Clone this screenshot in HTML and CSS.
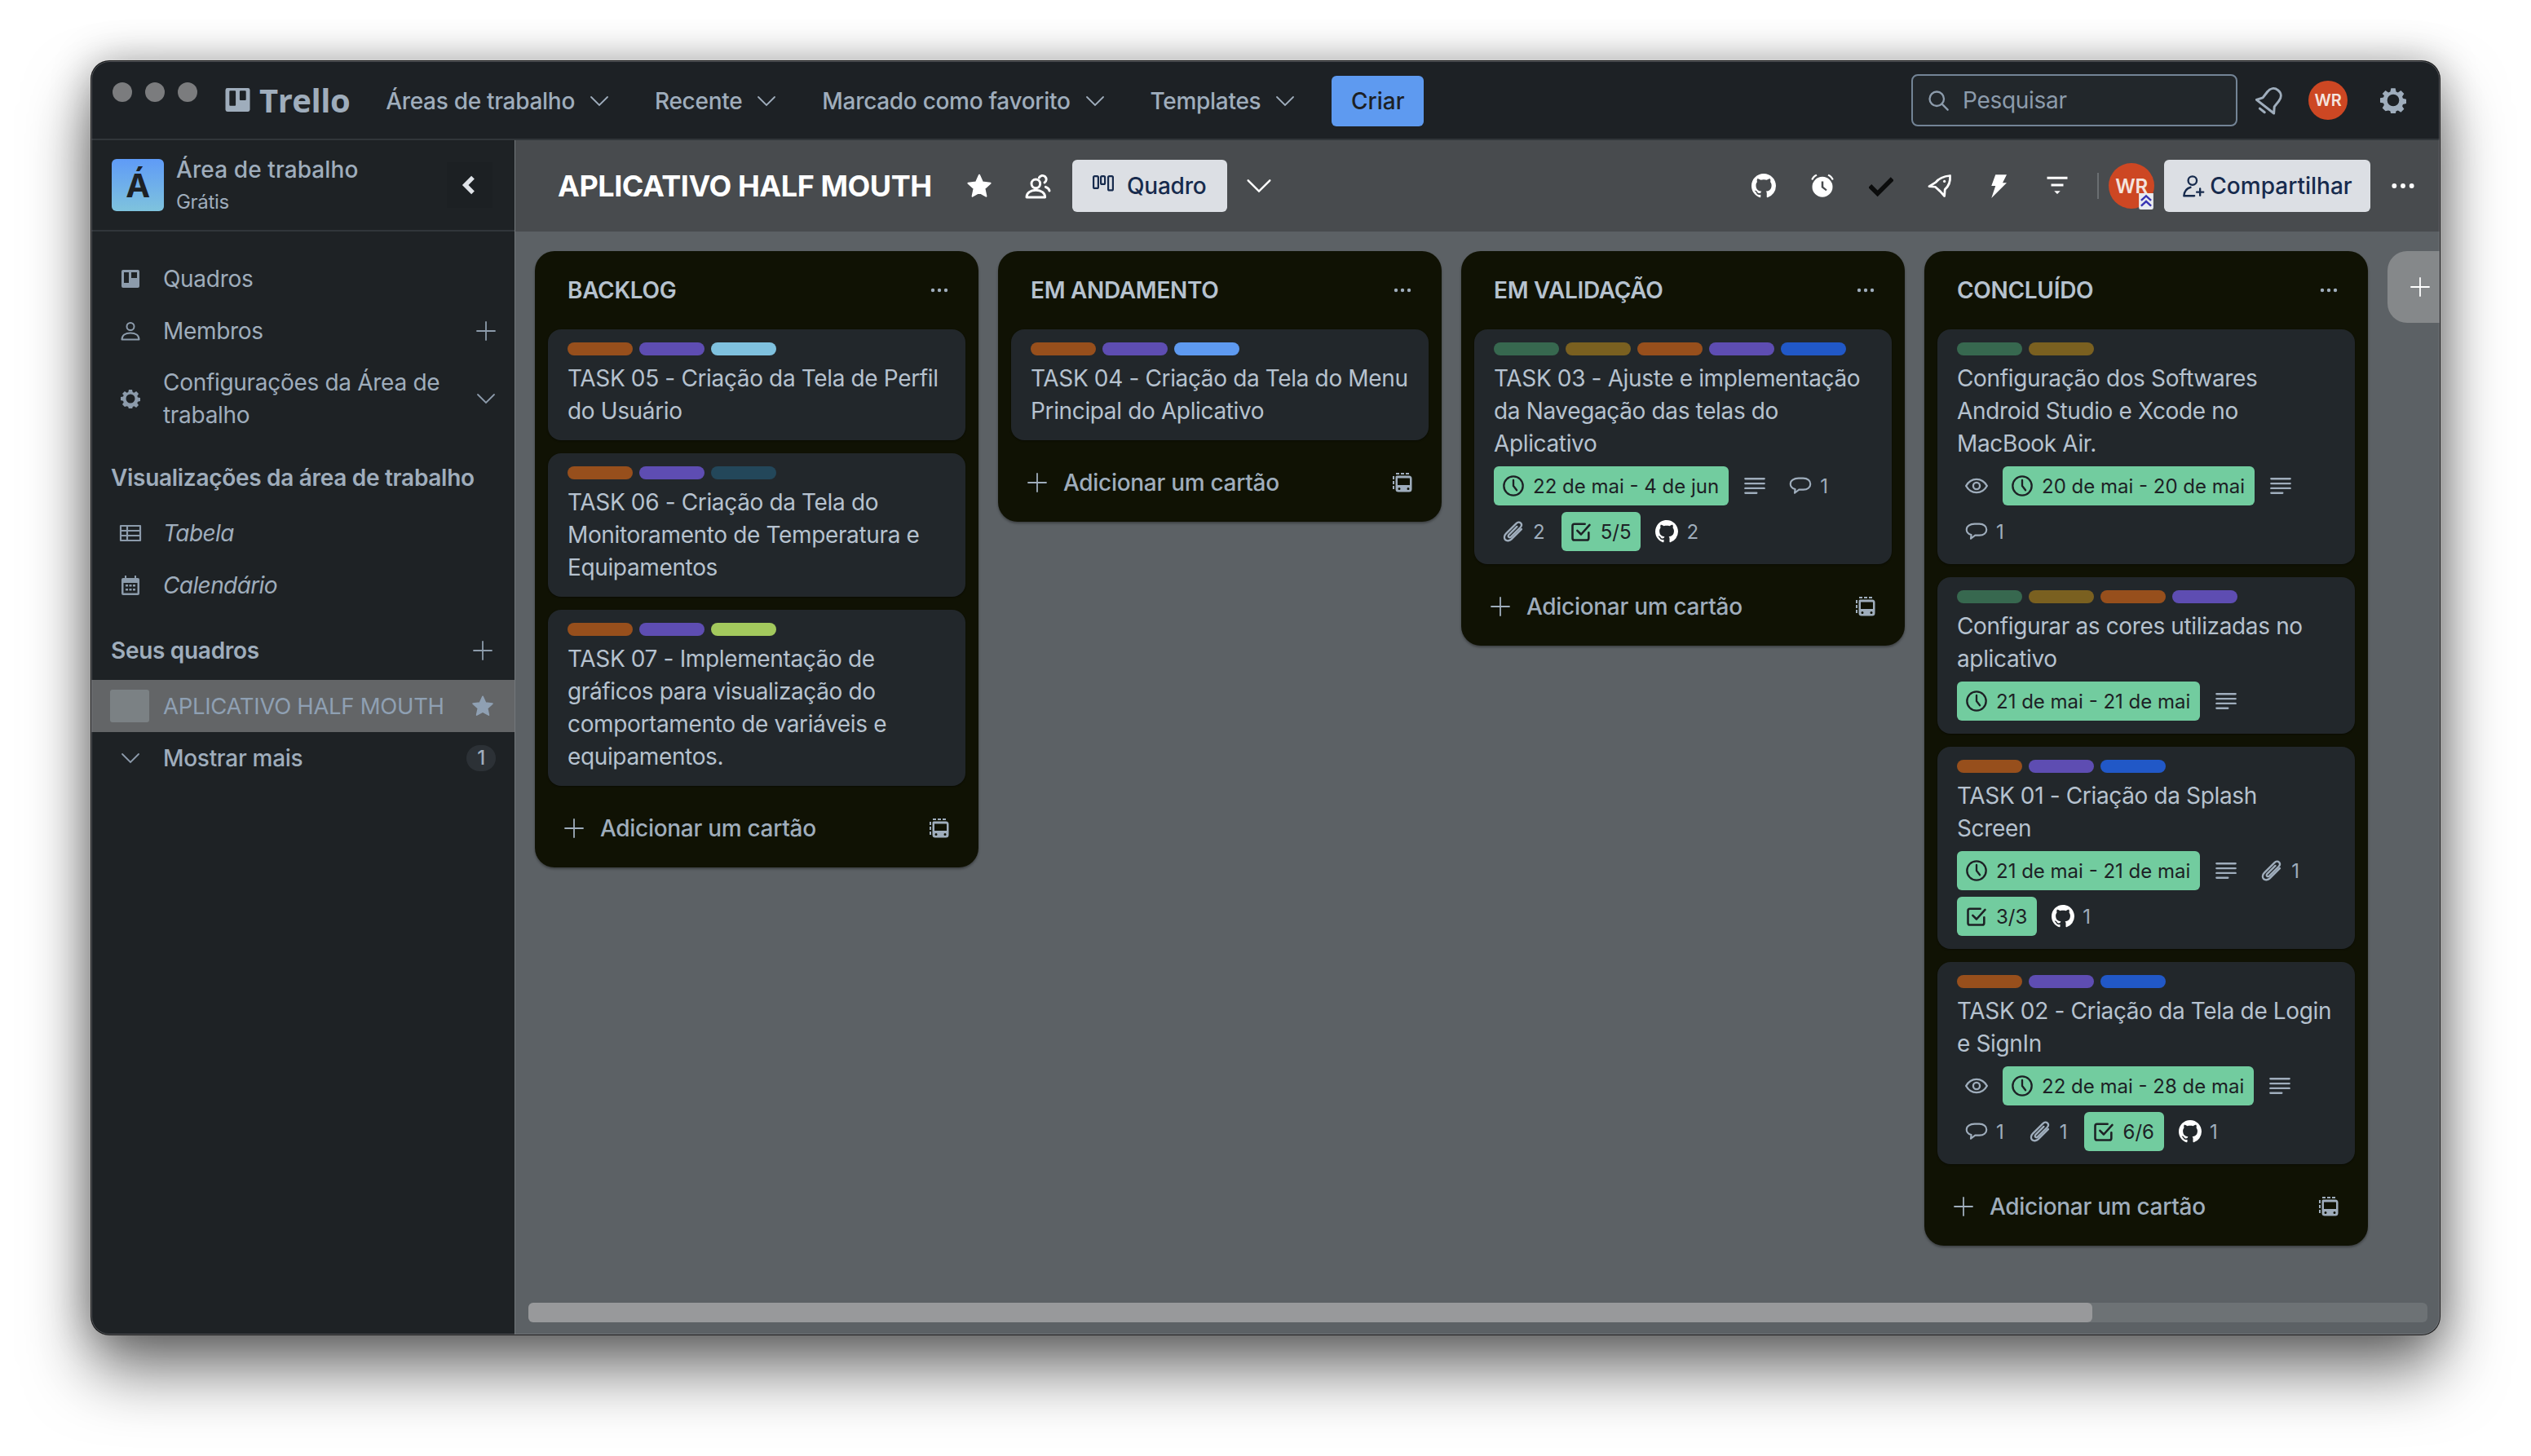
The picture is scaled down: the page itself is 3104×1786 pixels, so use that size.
FILE: index.html
```html
<!DOCTYPE html>
<html lang="pt-BR">
<head>
    <meta charset="UTF-8">
    <title>APLICATIVO HALF MOUTH | Trello</title>
    <link rel="stylesheet" href="styles.css">
</head>
<body>

<svg class="sprite" xmlns="http://www.w3.org/2000/svg">
    <symbol id="i-logo" viewBox="0 0 32 32"><path fill="currentColor" fill-rule="evenodd" d="M3 1h26a2.5 2.5 0 0 1 2.5 2.5v25A2.5 2.5 0 0 1 29 31H3a2.5 2.5 0 0 1-2.5-2.500v-25A2.5 2.5 0 0 1 3 1zm2.5 4.500v17a1 1 0 0 0 1 1h6a1 1 0 0 0 1-1v-17a1 1 0 0 0-1-1h-6a1 1 0 0 0-1 1zm13 0v10a1 1 0 0 0 1 1h6a1 1 0 0 0 1-1v-10a1 1 0 0 0-1-1h-6a1 1 0 0 0-1 1z"/></symbol>
    <symbol id="i-chev" viewBox="0 0 24 24"><path fill="none" stroke="currentColor" stroke-width="1.8" stroke-linecap="round" d="M2 7l10 10L22 7"/></symbol>
    <symbol id="i-plus" viewBox="0 0 24 24"><path fill="none" stroke="currentColor" stroke-width="1.8" stroke-linecap="round" d="M12 1v22M1 12h22"/></symbol>
    <symbol id="i-dots" viewBox="0 0 24 24"><circle cx="4" cy="12" r="2.2" fill="currentColor"/><circle cx="12" cy="12" r="2.2" fill="currentColor"/><circle cx="20" cy="12" r="2.2" fill="currentColor"/></symbol>
    <symbol id="i-search" viewBox="0 0 24 24"><circle cx="10.5" cy="10.5" r="7.500" fill="none" stroke="currentColor" stroke-width="2"/><path stroke="currentColor" stroke-width="2" stroke-linecap="round" d="M16 16l6 6"/></symbol>
    <symbol id="i-bell" viewBox="0 0 24 24"><g fill="none" stroke="currentColor" stroke-width="2" stroke-linejoin="round" stroke-linecap="round" transform="rotate(38 12 12)"><path d="M12 1.500c-3.700 0-6 2.700-6 6.500v6l-3 4.500h18L18 14V8c0-3.800-2.300-6.500-6-6.500z"/><path d="M9.500 22.500h5"/></g></symbol>
    <symbol id="i-gear" viewBox="0 0 24 24"><path fill="currentColor" fill-rule="evenodd" d="M10 1h4l.7 3.100 1.700.7L19.100 3l2.900 3-1.700 2.700.7 1.700 3 .6v4l-3 .7-.7 1.700 1.700 2.700-2.900 2.900-2.700-1.700-1.700.7-.7 3.100h-4l-.7-3.100-1.700-.7L4.900 22 2 19.100l1.700-2.700-.7-1.700-3-.7v-4l3-.6.7-1.700L2 6l2.900-3 2.700 1.800 1.700-.7zm2 5.500a5.500 5.500 0 1 0 0 11 5.500 5.500 0 0 0 0-11z"/></symbol>
    <symbol id="i-board" viewBox="0 0 24 24"><path fill="currentColor" fill-rule="evenodd" d="M3 1h18a2 2 0 0 1 2 2v18a2 2 0 0 1-2 2H3a2 2 0 0 1-2-2V3a2 2 0 0 1 2-2zm1 3v13h6V4zm9 0v7h7V4z"/></symbol>
    <symbol id="i-user" viewBox="0 0 24 24"><g fill="none" stroke="currentColor" stroke-width="2"><circle cx="12" cy="6.5" r="4.500"/><path d="M1.5 22.500c0-5 4-8 10.500-8s10.500 3 10.500 8z" stroke-linejoin="round"/></g></symbol>
    <symbol id="i-table" viewBox="0 0 28 24"><path fill="none" stroke="currentColor" stroke-width="2.2" stroke-linejoin="round" d="M2 3h24v18H2zM2 9h24M2 15h24M10 3v18"/></symbol>
    <symbol id="i-cal" viewBox="0 0 24 24"><path fill="currentColor" fill-rule="evenodd" d="M5 0h2v3h10V0h2v3h2a2 2 0 0 1 2 2v17a2 2 0 0 1-2 2H3a2 2 0 0 1-2-2V5a2 2 0 0 1 2-2h2zM3.500 9v12.500h17V9zM6 11h3v2.500H6zm4.500 0h3v2.500h-3zm4.500 0h3v2.500h-3zM6 16h3v2.500H6zm4.500 0h3v2.500h-3zm4.500 0h3v2.500h-3z"/></symbol>
    <symbol id="i-star" viewBox="0 0 24 24"><path fill="currentColor" stroke="currentColor" stroke-width="1.5" stroke-linejoin="round" d="M12 2l3 6.700 7.200.8-5.400 4.900 1.500 7.100L12 17.900l-6.300 3.600 1.500-7.100L1.800 9.500 9 8.700z"/></symbol>
    <symbol id="i-clock" viewBox="0 0 24 24"><g fill="none" stroke="currentColor" stroke-width="2" stroke-linecap="round" stroke-linejoin="round"><circle cx="12" cy="12" r="10"/><path d="M12 6v6l3.500 4.500"/></g></symbol>
    <symbol id="i-desc" viewBox="0 0 24 24"><path stroke="currentColor" stroke-width="2" stroke-linecap="round" d="M2 4.500h20M2 9.500h20M2 14.500h20M2 19.500h12"/></symbol>
    <symbol id="i-comment" viewBox="0 0 24 24"><path fill="none" stroke="currentColor" stroke-width="1.8" stroke-linejoin="round" d="M10 4h5c4.500 0 7.500 2.500 7.500 6s-3 6-7.500 6h-4.500l-4.500 3.500.5-4C3.300 14.500 1.500 12.500 1.500 10c0-3.500 3.500-6 8.500-6z"/></symbol>
    <symbol id="i-clip" viewBox="0 0 24 24"><path fill="none" stroke="currentColor" stroke-width="2" stroke-linecap="round" stroke-linejoin="round" d="M20.500 9.500L10 20c-2 2-5 2.200-6.500.7s-1.300-4.500.7-6.500L15 3.500c1.500-1.500 3.500-1.600 4.700-.4s1 3.100-.4 4.600L9.500 17.500c-.8.800-1.900.9-2.500.3s-.5-1.700.3-2.500l8.500-8.500"/></symbol>
    <symbol id="i-checkbox" viewBox="0 0 24 24"><g fill="none" stroke="currentColor" stroke-width="2.2" stroke-linecap="round" stroke-linejoin="round"><path d="M20 13v6a2 2 0 0 1-2 2H5a2 2 0 0 1-2-2V6a2 2 0 0 1 2-2h11"/><path d="M8 11l4 4 9-10"/></g></symbol>
    <symbol id="i-eye" viewBox="0 0 24 24"><g fill="none" stroke="currentColor" stroke-width="2"><path d="M1 12c2.500-4.500 6.500-7 11-7s8.500 2.500 11 7c-2.500 4.500-6.500 7-11 7s-8.500-2.500-11-7z" stroke-linejoin="round"/><circle cx="12" cy="12" r="3.500"/></g></symbol>
    <symbol id="i-template" viewBox="0 0 24 24"><path fill="currentColor" fill-rule="evenodd" d="M5 3.500h15a3.500 3.500 0 0 1 3.500 3.500v13a3.500 3.500 0 0 1-3.500 3.500H7A3.500 3.500 0 0 1 3.500 20V5A1.500 1.500 0 0 1 5 3.500zM6 6.500V15h15V7a.5.5 0 0 0-.5-.5zM8 18a1.500 1.500 0 0 0 0 3 1.500 1.500 0 0 0 0-3zm11 0a1.500 1.500 0 0 0 0 3 1.500 1.500 0 0 0 0-3zM4 0h4v2H4zm6 0h4v2h-4zm6 0h4v2h-4zM0 4h2v4H0zm0 6h2v4H0zm0 6h2v4H0z"/></symbol>
    <symbol id="i-gh" viewBox="0 0 16 16"><path fill="currentColor" d="M8 0C3.580 0 0 3.580 0 8c0 3.540 2.290 6.530 5.470 7.590.4.070.55-.17.55-.38 0-.19-.01-.82-.01-1.490-2.010.37-2.530-.49-2.690-.94-.09-.23-.48-.94-.82-1.130-.28-.15-.68-.52-.01-.53.63-.01 1.080.58 1.230.82.720 1.210 1.870.87 2.330.66.070-.52.28-.87.51-1.070-1.780-.2-3.640-.89-3.640-3.950 0-.87.31-1.590.82-2.150-.08-.2-.36-1.020.08-2.120 0 0 .67-.21 2.200.82.640-.18 1.320-.27 2-.27.680 0 1.360.09 2 .27 1.530-1.040 2.200-.82 2.200-.82.440 1.100.160 1.920.080 2.120.510.560.820 1.270.820 2.150 0 3.070-1.870 3.750-3.650 3.950.290.250.540.730.540 1.480 0 1.070-.010 1.930-.010 2.200 0 .210.150.460.550.380A8.013 8.013 0 0 0 16 8c0-4.420-3.580-8-8-8z"/></symbol>
    <symbol id="i-alarm" viewBox="0 0 24 24"><g fill="currentColor"><path fill-rule="evenodd" d="M12 3a10 10 0 1 1 0 20 10 10 0 0 1 0-20zm-1 4.500v6l4.500 3.500 1-1.500-3.500-2.800V7.500z"/><path d="M1 5.500C2 3 3.500 1.500 6 .5l.8 1.500C4.800 3 3.500 4.300 2.500 6.300zM23 5.500C22 3 20.500 1.500 18 .5l-.8 1.500c2 1 3.300 2.300 4.300 4.300z"/></g></symbol>
    <symbol id="i-tick" viewBox="0 0 24 24"><path fill="none" stroke="currentColor" stroke-width="4.5" d="M1 12l7.500 7.500L23 5"/></symbol>
    <symbol id="i-rocket" viewBox="0 0 24 24"><path fill="none" stroke="currentColor" stroke-width="2.2" stroke-linejoin="round" d="M22 2c.5 5.500-1 10-5 13.500l-.5 6.500-4-4.500-5-4.500L1.500 12.500 8 8.500C11.500 4 16 2.500 22 2z"/><circle cx="16.500" cy="7.500" r="1.300" fill="currentColor"/></symbol>
    <symbol id="i-bolt" viewBox="0 0 24 24"><path fill="currentColor" d="M9 1h11l-4 8h4L5 24l4-12H5z"/></symbol>
    <symbol id="i-filter" viewBox="0 0 24 24"><path fill="currentColor" d="M2 3h20v2.400H2zM6 10h12v2.400H6zM9 17h6l-3 3z"/></symbol>
    <symbol id="i-people" viewBox="0 0 24 24"><g fill="none" stroke="currentColor" stroke-width="2.2" stroke-linejoin="round" stroke-linecap="round"><circle cx="10" cy="10" r="4"/><path d="M1.500 22.500c0-4 3.500-6.500 8.500-6.500s8.500 2.500 8.500 6.500z"/><path d="M13 4.500a3.500 3.500 0 1 1 5 4.500M19 13c2 .7 3.200 2 3.500 3.500"/></g></symbol>
    <symbol id="i-quadro" viewBox="0 0 26 20"><g fill="none" stroke="currentColor" stroke-width="2.2"><rect x="1.100" y="1.100" width="5.800" height="14.800" rx="1.500"/><rect x="10.100" y="1.100" width="5" height="9.800" rx="1.500"/><rect x="19.100" y="1.100" width="5.800" height="17.300" rx="1.500"/></g></symbol>
    <symbol id="i-share" viewBox="0 0 24 24"><g fill="none" stroke="currentColor" stroke-width="2" stroke-linecap="round" stroke-linejoin="round"><circle cx="11" cy="6.500" r="4.500"/><path d="M9 13.500C5 14.500 2.500 17 2 22.500h11M19 15v7M15.500 18.500h7"/></g></symbol>
    <symbol id="i-admin" viewBox="0 0 16 18"><path fill="#e8ebf0" d="M0 0h16v16a2 2 0 0 1-2 2H2a2 2 0 0 1-2-2z"/><path fill="none" stroke="#3a36b4" stroke-width="2.2" d="M2.500 8L8 3l5.500 5M2.500 14L8 9l5.500 5"/></symbol>
</svg>

<div class="window">

    <header class="topbar">
        <div class="traffic"><i></i><i></i><i></i></div>
        <div class="logo">
            <svg class="logo-mark"><use href="#i-logo"/></svg>
            <span>Trello</span>
        </div>
        <nav class="topnav">
            <a>Áreas de trabalho <svg class="chev"><use href="#i-chev"/></svg></a>
            <a>Recente <svg class="chev"><use href="#i-chev"/></svg></a>
            <a>Marcado como favorito <svg class="chev"><use href="#i-chev"/></svg></a>
            <a>Templates <svg class="chev"><use href="#i-chev"/></svg></a>
            <button class="create">Criar</button>
        </nav>
        <div class="topright">
            <div class="search">
                <svg class="ic-28"><use href="#i-search"/></svg>
                <span>Pesquisar</span>
            </div>
            <svg class="bell"><use href="#i-bell"/></svg>
            <span class="avatar avatar-small">WR</span>
            <svg class="gear"><use href="#i-gear"/></svg>
        </div>
    </header>

    <div class="body">

        <aside class="sidebar">
            <div class="workspace">
                <div class="ws-tile">Á</div>
                <div class="ws-name">
                    <b>Área de trabalho</b>
                    <span>Grátis</span>
                </div>
                <div class="ws-back">
                    <svg viewBox="0 0 24 24"><path fill="none" stroke="currentColor" stroke-width="4" d="M15 5l-7 7 7 7"/></svg>
                </div>
            </div>

            <div class="sidenav">
                <a class="side-item">
                    <svg class="ic-24"><use href="#i-board"/></svg>
                    <span>Quadros</span>
                </a>
                <a class="side-item">
                    <svg class="ic-24"><use href="#i-user"/></svg>
                    <span>Membros</span>
                    <svg class="side-action"><use href="#i-plus"/></svg>
                </a>
                <a class="side-item tall">
                    <svg class="ic-24"><use href="#i-gear"/></svg>
                    <span>Configurações da Área de trabalho</span>
                    <svg class="side-action"><use href="#i-chev"/></svg>
                </a>

                <h4 class="side-title views">Visualizações da área de trabalho</h4>
                <a class="side-item em">
                    <svg class="ic-table"><use href="#i-table"/></svg>
                    <span>Tabela</span>
                </a>
                <a class="side-item em">
                    <svg class="ic-24"><use href="#i-cal"/></svg>
                    <span>Calendário</span>
                </a>

                <h4 class="side-title boards">Seus quadros <svg class="side-action"><use href="#i-plus"/></svg></h4>
                <a class="board-link">
                    <i class="board-thumb"></i>
                    <span>APLICATIVO HALF MOUTH</span>
                    <svg class="board-star"><use href="#i-star"/></svg>
                </a>
                <a class="side-item medium">
                    <svg class="ic-24"><use href="#i-chev"/></svg>
                    <span>Mostrar mais</span>
                    <em class="count">1</em>
                </a>
            </div>
        </aside>

        <main class="board">
            <div class="boardbar">
                <h1>APLICATIVO HALF MOUTH</h1>
                <svg class="bar-icon star"><use href="#i-star"/></svg>
                <svg class="bar-icon people"><use href="#i-people"/></svg>
                <button class="view-btn"><svg class="ic-quadro"><use href="#i-quadro"/></svg> Quadro</button>
                <svg class="bar-chev"><use href="#i-chev"/></svg>

                <div class="bar-right">
                    <svg class="bar-icon"><use href="#i-gh"/></svg>
                    <svg class="bar-icon"><use href="#i-alarm"/></svg>
                    <svg class="bar-icon tick"><use href="#i-tick"/></svg>
                    <svg class="bar-icon"><use href="#i-rocket"/></svg>
                    <svg class="bar-icon"><use href="#i-bolt"/></svg>
                    <svg class="bar-icon"><use href="#i-filter"/></svg>
                    <i class="bar-sep"></i>
                    <span class="avatar avatar-big">WR<svg class="admin"><use href="#i-admin"/></svg></span>
                    <button class="share"><svg class="ic-28"><use href="#i-share"/></svg> Compartilhar</button>
                    <svg class="bar-dots"><use href="#i-dots"/></svg>
                </div>
            </div>

            <div class="canvas">
                <div class="lists">

                    <section class="list">
                        <div class="list-head"><h2>BACKLOG</h2><svg class="list-dots"><use href="#i-dots"/></svg></div>
                        <article class="card">
                            <div class="labels"><i class="orange"></i><i class="purple"></i><i class="sky"></i></div>
                            <p>TASK 05 - Criação da Tela de Perfil do Usuário</p>
                        </article>
                        <article class="card">
                            <div class="labels"><i class="orange"></i><i class="purple"></i><i class="teal"></i></div>
                            <p>TASK 06 - Criação da Tela do Monitoramento de Temperatura e Equipamentos</p>
                        </article>
                        <article class="card">
                            <div class="labels"><i class="orange"></i><i class="purple"></i><i class="lime"></i></div>
                            <p>TASK 07 - Implementação de gráficos para visualização do comportamento de variáveis e equipamentos.</p>
                        </article>
                        <div class="add-card">
                            <svg class="add-plus"><use href="#i-plus"/></svg>
                            <span>Adicionar um cartão</span>
                            <svg class="add-tpl"><use href="#i-template"/></svg>
                        </div>
                    </section>

                    <section class="list">
                        <div class="list-head"><h2>EM ANDAMENTO</h2><svg class="list-dots"><use href="#i-dots"/></svg></div>
                        <article class="card">
                            <div class="labels"><i class="orange"></i><i class="purple"></i><i class="blue-light"></i></div>
                            <p>TASK 04 - Criação da Tela do Menu Principal do Aplicativo</p>
                        </article>
                        <div class="add-card">
                            <svg class="add-plus"><use href="#i-plus"/></svg>
                            <span>Adicionar um cartão</span>
                            <svg class="add-tpl"><use href="#i-template"/></svg>
                        </div>
                    </section>

                    <section class="list">
                        <div class="list-head"><h2>EM VALIDAÇÃO</h2><svg class="list-dots"><use href="#i-dots"/></svg></div>
                        <article class="card">
                            <div class="labels"><i class="green"></i><i class="yellow"></i><i class="orange"></i><i class="purple"></i><i class="blue"></i></div>
                            <p>TASK 03 - Ajuste e implementação da Navegação das telas do Aplicativo</p>
                            <div class="badges">
                                <span class="badge done"><svg><use href="#i-clock"/></svg>22 de mai - 4 de jun</span>
                                <span class="badge only"><svg><use href="#i-desc"/></svg></span>
                                <span class="badge"><svg><use href="#i-comment"/></svg>1</span>
                                <span class="badge"><svg><use href="#i-clip"/></svg>2</span>
                                <span class="badge done"><svg><use href="#i-checkbox"/></svg>5/5</span>
                                <span class="badge"><svg class="gh"><use href="#i-gh"/></svg>2</span>
                            </div>
                        </article>
                        <div class="add-card">
                            <svg class="add-plus"><use href="#i-plus"/></svg>
                            <span>Adicionar um cartão</span>
                            <svg class="add-tpl"><use href="#i-template"/></svg>
                        </div>
                    </section>

                    <section class="list">
                        <div class="list-head"><h2>CONCLUÍDO</h2><svg class="list-dots"><use href="#i-dots"/></svg></div>
                        <article class="card">
                            <div class="labels"><i class="green"></i><i class="yellow"></i></div>
                            <p>Configuração dos Softwares Android Studio e Xcode no MacBook Air.</p>
                            <div class="badges">
                                <span class="badge only"><svg><use href="#i-eye"/></svg></span>
                                <span class="badge done"><svg><use href="#i-clock"/></svg>20 de mai - 20 de mai</span>
                                <span class="badge only"><svg><use href="#i-desc"/></svg></span>
                                <span class="badge"><svg><use href="#i-comment"/></svg>1</span>
                            </div>
                        </article>
                        <article class="card">
                            <div class="labels"><i class="green"></i><i class="yellow"></i><i class="orange"></i><i class="purple"></i></div>
                            <p>Configurar as cores utilizadas no aplicativo</p>
                            <div class="badges">
                                <span class="badge done"><svg><use href="#i-clock"/></svg>21 de mai - 21 de mai</span>
                                <span class="badge only"><svg><use href="#i-desc"/></svg></span>
                            </div>
                        </article>
                        <article class="card">
                            <div class="labels"><i class="orange"></i><i class="purple"></i><i class="blue"></i></div>
                            <p>TASK 01 - Criação da Splash Screen</p>
                            <div class="badges">
                                <span class="badge done"><svg><use href="#i-clock"/></svg>21 de mai - 21 de mai</span>
                                <span class="badge only"><svg><use href="#i-desc"/></svg></span>
                                <span class="badge"><svg><use href="#i-clip"/></svg>1</span>
                                <span class="badge done"><svg><use href="#i-checkbox"/></svg>3/3</span>
                                <span class="badge"><svg class="gh"><use href="#i-gh"/></svg>1</span>
                            </div>
                        </article>
                        <article class="card">
                            <div class="labels"><i class="orange"></i><i class="purple"></i><i class="blue"></i></div>
                            <p>TASK 02 - Criação da Tela de Login e SignIn</p>
                            <div class="badges">
                                <span class="badge only"><svg><use href="#i-eye"/></svg></span>
                                <span class="badge done"><svg><use href="#i-clock"/></svg>22 de mai - 28 de mai</span>
                                <span class="badge only"><svg><use href="#i-desc"/></svg></span>
                                <span class="badge"><svg><use href="#i-comment"/></svg>1</span>
                                <span class="badge"><svg><use href="#i-clip"/></svg>1</span>
                                <span class="badge done"><svg><use href="#i-checkbox"/></svg>6/6</span>
                                <span class="badge"><svg class="gh"><use href="#i-gh"/></svg>1</span>
                            </div>
                        </article>
                        <div class="add-card">
                            <svg class="add-plus"><use href="#i-plus"/></svg>
                            <span>Adicionar um cartão</span>
                            <svg class="add-tpl"><use href="#i-template"/></svg>
                        </div>
                    </section>

                    <div class="add-list">
                        <svg><use href="#i-plus"/></svg>
                    </div>
                </div>

                <div class="scrollbar"><div class="thumb"></div></div>
            </div>
        </main>
    </div>
</div>

</body>
</html>
```

FILE: styles.css
```css
* {
    box-sizing: border-box;
}

html, body {
    margin: 0;
    height: 100%;
}

body {
    background-color: #fff;
    font-family: Inter, "Liberation Sans", sans-serif;
    font-size: 28px;
    letter-spacing: -0.3px;
    padding: 75px 0 0 112px;
    overflow: hidden;
}

svg {
    flex: none;
    display: block;
}

.sprite {
    display: none;
}

.window {
    position: relative;
    width: 2880px;
    height: 1562px;
    display: flex;
    flex-direction: column;
    overflow: hidden;
    border-radius: 22px;
    background-color: #1d2125;
    box-shadow: 0 0 0 1px #1a1a1a, 0 44px 80px rgba(0, 0, 0, 0.55), 0 0 50px rgba(0, 0, 0, 0.3);
}

/* light edge of the window, over everything in it */
.window::after {
    content: "";
    position: absolute;
    inset: 0;
    border: 1px solid rgba(140, 140, 145, 0.5);
    border-radius: 22px;
    pointer-events: none;
}

/* top bar */

.topbar {
    flex: none;
    height: 97px;
    display: flex;
    align-items: center;
    color: #9fadbc;
    background-color: #1d2125;
    border-bottom: 2px solid #31363a;
    padding: 0 0 0 26px;
}

.traffic {
    display: flex;
    gap: 16px;
    margin: -19px 0 0 0;
}

.traffic i {
    width: 24px;
    height: 24px;
    border-radius: 50%;
    background-color: #7b7c7e;
}

.logo {
    display: flex;
    align-items: center;
    gap: 11px;
    margin-left: 34px;
    color: #9fadbc;
}

.logo span {
    font-size: 40px;
    font-weight: 700;
    letter-spacing: -0.5px;
    font-family: "Open Sans", Inter, sans-serif;
}

.logo-mark {
    width: 31px;
    height: 31px;
}

.topnav {
    display: flex;
    align-items: center;
    margin-left: 44px;
    padding-top: 2px;
    font-weight: 500;
}

.topnav a {
    display: flex;
    align-items: center;
    gap: 18px;
    margin-right: 56px;
    white-space: nowrap;
}

.chev {
    width: 24px;
    height: 24px;
}

.create {
    width: 113px;
    height: 62px;
    border: 0;
    border-radius: 6px;
    background-color: #5e9af0;
    color: #1d2125;
    font: 500 28px Inter, sans-serif;
    margin-left: -11px;
}

.topright {
    margin-left: auto;
    display: flex;
    align-items: center;
}

.search {
    width: 400px;
    height: 64px;
    border: 2px solid #738496;
    border-radius: 8px;
    background-color: #22272b;
    display: flex;
    align-items: center;
    gap: 16px;
    padding: 1px 0 0 17px;
    color: #8c9bab;
}

.ic-28 {
    width: 28px;
    height: 28px;
}

.bell {
    width: 36px;
    height: 36px;
    margin-left: 22px;
}

.gear {
    width: 32px;
    height: 32px;
    margin: 0 41px 0 40px;
}

.avatar {
    position: relative;
    display: flex;
    align-items: center;
    justify-content: center;
    border-radius: 50%;
    background-color: #cd4723;
    color: #f4e4de;
    font-weight: 600;
}

.avatar-small {
    width: 48px;
    height: 48px;
    font-size: 20px;
    margin-left: 29px;
}

.avatar-big {
    width: 56px;
    height: 56px;
    font-size: 24px;
}

.admin {
    position: absolute;
    right: 1px;
    bottom: -1px;
    width: 18px;
    height: 20px;
}

/* body */

.body {
    flex: 1;
    min-height: 0;
    display: flex;
}

.sidebar {
    flex: none;
    width: 520px;
    background-color: #1e2225;
    color: #9fadbc;
    border-right: 1px solid #73787b;
}

.workspace {
    height: 112px;
    display: flex;
    align-items: center;
    border-bottom: 2px solid #31363a;
    padding-left: 25px;
}

.ws-tile {
    width: 64px;
    height: 64px;
    border-radius: 6px;
    background: linear-gradient(180deg, #5f9bf7, #7fc3dd);
    color: #1d2125;
    font-size: 40px;
    font-weight: 700;
    display: flex;
    align-items: center;
    justify-content: center;
}

.ws-name {
    margin-left: 15px;
    padding-top: 2px;
    display: flex;
    flex-direction: column;
}

.ws-name b {
    font-weight: 500;
    line-height: 40px;
    letter-spacing: 0.1px;
}

.ws-name span {
    font-size: 24px;
    line-height: 40px;
}

.ws-back {
    margin-left: auto;
    margin-right: 27px;
    width: 56px;
    height: 56px;
    display: flex;
    align-items: center;
    justify-content: center;
    background-color: #1c2023;
    color: #dfe3e8;
}

.ws-back svg {
    width: 32px;
    height: 32px;
}

.sidenav {
    padding-top: 26px;
}

.side-item {
    display: flex;
    align-items: center;
    height: 64px;
    padding-left: 36px;
    line-height: 40px;
}

.side-item.tall {
    height: 96px;
    margin-top: 3px;
}

.side-item.em {
    font-style: italic;
    letter-spacing: -0.6px;
}

.side-item.medium {
    font-weight: 500;
}

.side-item > span {
    margin-left: 28px;
    max-width: 370px;
}

.ic-24 {
    width: 24px;
    height: 24px;
    color: #8c9bab;
}

.ic-table {
    width: 32px;
    height: 24px;
    margin: 0 -4px;
    color: #8c9bab;
}

.side-action {
    width: 24px;
    height: 24px;
    margin-left: auto;
    margin-right: 23px;
    color: #8c9bab;
}

.side-title {
    margin: 0;
    height: 56px;
    display: flex;
    align-items: center;
    padding-left: 24px;
    font-size: 28px;
    font-weight: 600;
    white-space: nowrap;
}

.side-title.views {
    margin-top: 21px;
    margin-bottom: 8px;
}

.side-title.boards {
    margin-top: 20px;
    margin-bottom: 8px;
}

.side-title .side-action {
    margin-right: 27px;
}

.board-link {
    display: flex;
    align-items: center;
    height: 64px;
    padding-left: 23px;
    background-color: #636567;
    color: #8fa0b3;
}

.board-link span {
    margin-left: 17px;
    white-space: nowrap;
    font-size: 27.5px;
}

.board-thumb {
    width: 48px;
    height: 40px;
    border-radius: 3px;
    background-color: #7b8184;
}

.board-star {
    width: 28px;
    height: 28px;
    margin-left: auto;
    margin-right: 25px;
    color: #8fa0b3;
}

.count {
    margin-left: auto;
    margin-right: 23px;
    width: 36px;
    height: 32px;
    border-radius: 16px;
    background-color: #2c3136;
    font-size: 24px;
    font-style: normal;
    display: flex;
    align-items: center;
    justify-content: center;
}

/* board */

.board {
    flex: 1;
    min-width: 0;
    display: flex;
    flex-direction: column;
    background-color: #5c6165;
}

.boardbar {
    flex: none;
    height: 112px;
    display: flex;
    align-items: center;
    padding-left: 52px;
    color: #fff;
    background-color: #484b4e;
}

.boardbar h1 {
    margin: 0 22px 0 0;
    font-size: 36px;
    font-weight: 700;
    letter-spacing: -0.45px;
    white-space: nowrap;
}

.bar-icon {
    width: 32px;
    height: 32px;
    margin: 0 20px;
}

.bar-icon.tick {
    color: #0b0c0c;
}

.view-btn {
    margin: 0 0 0 6px;
    width: 190px;
    height: 64px;
    border: 0;
    border-radius: 6px;
    background-color: #dcdfe4;
    color: #172b4d;
    font: 500 28px Inter, sans-serif;
    letter-spacing: -0.2px;
    display: flex;
    align-items: center;
    justify-content: center;
    gap: 16px;
}

.ic-quadro {
    width: 26px;
    height: 20px;
    margin-top: -6px;
}

.bar-chev {
    width: 32px;
    height: 32px;
    margin-left: 23px;
}

.bar-right {
    margin-left: auto;
    display: flex;
    align-items: center;
    color: #fff;
}

.bar-right .bar-icon {
    width: 30px;
    height: 30px;
    margin: 0 21px;
}

.bar-sep {
    width: 2px;
    height: 32px;
    margin: 0 12px 0 13px;
    background-color: #6a6e71;
}

.share {
    margin-left: 12px;
    width: 253px;
    height: 64px;
    border: 0;
    border-radius: 6px;
    background-color: #dcdfe4;
    color: #172b4d;
    font: 500 28px Inter, sans-serif;
    display: flex;
    align-items: center;
    justify-content: center;
    gap: 6px;
}

.bar-dots {
    width: 32px;
    height: 32px;
    margin: 0 29px 0 24px;
}

.canvas {
    flex: 1;
    min-height: 0;
    display: flex;
    flex-direction: column;
}

.lists {
    flex: 1;
    min-height: 0;
    display: flex;
    align-items: flex-start;
    gap: 24px;
    padding: 24px 0 0 24px;
    overflow: hidden;
}

.list {
    flex: none;
    width: 544px;
    padding: 0 16px 12px;
    border-radius: 24px;
    background-color: #101204;
    box-shadow: 0 2px 3px rgba(0, 0, 0, 0.35);
}

.list-head {
    height: 96px;
    display: flex;
    align-items: center;
    justify-content: space-between;
    padding: 0 20px 0 24px;
}

.list-head h2 {
    margin: 0;
    font-size: 28px;
    font-weight: 600;
    color: #b6c2cf;
}

.list-dots {
    width: 24px;
    height: 24px;
    color: #9fadbc;
}

.card {
    background-color: #22272b;
    border-radius: 16px;
    padding: 16px 24px;
    margin-bottom: 16px;
    color: #b6c2cf;
    box-shadow: 0 1px 2px rgba(0, 0, 0, 0.4);
}

.card p {
    margin: 0;
    line-height: 40px;
    letter-spacing: -0.36px;
}

.labels {
    display: flex;
    gap: 8px;
    margin-bottom: 8px;
}

.labels i {
    width: 80px;
    height: 16px;
    border-radius: 8px;
}

.orange { background-color: #974f1c; }
.purple { background-color: #5e4db2; }
.sky { background-color: #7fc1de; }
.teal { background-color: #23475a; }
.lime { background-color: #a3c95d; }
.green { background-color: #37684f; }
.yellow { background-color: #7a6020; }
.blue { background-color: #2158c7; }
.blue-light { background-color: #5e9af0; }

.badges {
    display: flex;
    flex-wrap: wrap;
    gap: 8px;
    margin-top: 8px;
}

.badge {
    height: 48px;
    display: flex;
    align-items: center;
    gap: 8px;
    padding: 0 12px 0 8px;
    border-radius: 6px;
    font-size: 24px;
    letter-spacing: 0;
    color: #9fadbc;
    white-space: nowrap;
}

.badge.only {
    padding: 0 8px;
}

.badge svg {
    width: 32px;
    height: 32px;
    padding: 2px;
}

.badge.done {
    background-color: #72cc9f;
    color: #1d2125;
}

.badge svg.gh {
    color: #fff;
}

.add-card {
    height: 72px;
    display: flex;
    align-items: center;
    padding: 0 20px 0 20px;
    color: #9fadbc;
    font-weight: 500;
}

.add-plus {
    width: 24px;
    height: 24px;
    margin-right: 20px;
}

.add-tpl {
    width: 24px;
    height: 24px;
    margin-left: auto;
}

.add-list {
    flex: none;
    width: 544px;
    height: 88px;
    border-radius: 24px;
    background-color: #85888a;
    color: #fff;
    display: flex;
    align-items: center;
    padding-left: 28px;
}

.add-list svg {
    width: 24px;
    height: 24px;
}

.scrollbar {
    flex: none;
    height: 24px;
    margin: 0 15px 15px 16px;
    border-radius: 6px;
    background-color: #6d7275;
}

.thumb {
    width: 1918px;
    height: 24px;
    border-radius: 6px;
    background-color: #98999b;
}
```
